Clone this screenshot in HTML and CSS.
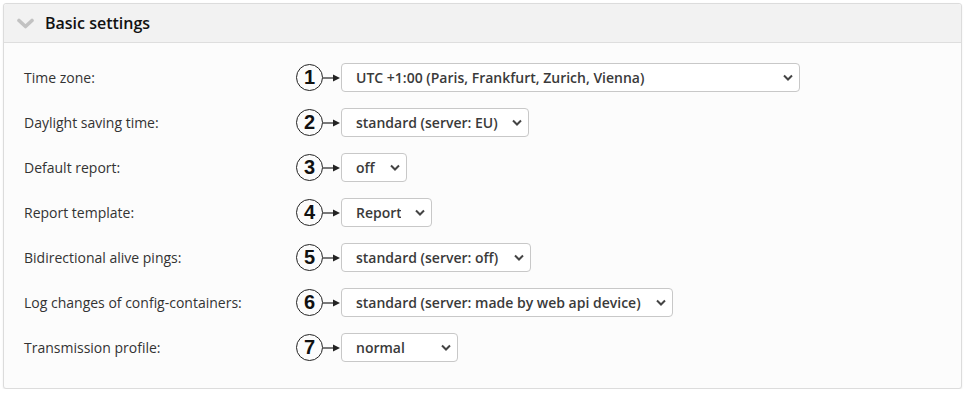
FILE: index.html
```html
<!DOCTYPE html>
<html lang="en">
<head>
    <meta charset="UTF-8">
    <meta name="viewport" content="width=device-width, initial-scale=1.0">
    <title>Basic settings</title>
    <link rel="stylesheet" href="styles.css">
</head>
<body>
    <div class="panel">
        <div class="panel-heading">
            <svg class="toggle-icon" width="17" height="11" viewBox="0 0 17 11">
                <path d="M2 2.5 L8.5 8.5 L15 2.5" stroke="#c2c2c2" stroke-width="3.6" fill="none" stroke-linecap="round" stroke-linejoin="round"/>
            </svg>
            <span class="panel-title">Basic settings</span>
        </div>
        <div class="panel-body">
            <div class="form-row">
                <label>Time zone:</label>
                <span class="marker">1</span>
                <svg class="arrow" width="18" height="10" viewBox="0 0 18 10"><path d="M0 5 H11" stroke="#222" stroke-width="1.2"/><path d="M10 1.5 L17 5 L10 8.5 Z" fill="#222"/></svg>
                <div class="select-wrap">
                    <select class="w-tz">
                        <option>UTC +1:00 (Paris, Frankfurt, Zurich, Vienna)</option>
                    </select>
                    <svg class="chevron" width="10" height="7" viewBox="0 0 10 7"><path d="M1 1.5 L5 5.5 L9 1.5" stroke="#444" stroke-width="2" fill="none"/></svg>
                </div>
            </div>
            <div class="form-row">
                <label>Daylight saving time:</label>
                <span class="marker">2</span>
                <svg class="arrow" width="18" height="10" viewBox="0 0 18 10"><path d="M0 5 H11" stroke="#222" stroke-width="1.2"/><path d="M10 1.5 L17 5 L10 8.5 Z" fill="#222"/></svg>
                <div class="select-wrap">
                    <select class="w-dst">
                        <option>standard (server: EU)</option>
                    </select>
                    <svg class="chevron" width="10" height="7" viewBox="0 0 10 7"><path d="M1 1.5 L5 5.5 L9 1.5" stroke="#444" stroke-width="2" fill="none"/></svg>
                </div>
            </div>
            <div class="form-row">
                <label>Default report:</label>
                <span class="marker">3</span>
                <svg class="arrow" width="18" height="10" viewBox="0 0 18 10"><path d="M0 5 H11" stroke="#222" stroke-width="1.2"/><path d="M10 1.5 L17 5 L10 8.5 Z" fill="#222"/></svg>
                <div class="select-wrap">
                    <select class="w-off">
                        <option>off</option>
                    </select>
                    <svg class="chevron" width="10" height="7" viewBox="0 0 10 7"><path d="M1 1.5 L5 5.5 L9 1.5" stroke="#444" stroke-width="2" fill="none"/></svg>
                </div>
            </div>
            <div class="form-row">
                <label>Report template:</label>
                <span class="marker">4</span>
                <svg class="arrow" width="18" height="10" viewBox="0 0 18 10"><path d="M0 5 H11" stroke="#222" stroke-width="1.2"/><path d="M10 1.5 L17 5 L10 8.5 Z" fill="#222"/></svg>
                <div class="select-wrap">
                    <select class="w-report">
                        <option>Report</option>
                    </select>
                    <svg class="chevron" width="10" height="7" viewBox="0 0 10 7"><path d="M1 1.5 L5 5.5 L9 1.5" stroke="#444" stroke-width="2" fill="none"/></svg>
                </div>
            </div>
            <div class="form-row">
                <label>Bidirectional alive pings:</label>
                <span class="marker">5</span>
                <svg class="arrow" width="18" height="10" viewBox="0 0 18 10"><path d="M0 5 H11" stroke="#222" stroke-width="1.2"/><path d="M10 1.5 L17 5 L10 8.5 Z" fill="#222"/></svg>
                <div class="select-wrap">
                    <select class="w-ping">
                        <option>standard (server: off)</option>
                    </select>
                    <svg class="chevron" width="10" height="7" viewBox="0 0 10 7"><path d="M1 1.5 L5 5.5 L9 1.5" stroke="#444" stroke-width="2" fill="none"/></svg>
                </div>
            </div>
            <div class="form-row">
                <label>Log changes of config-containers:</label>
                <span class="marker">6</span>
                <svg class="arrow" width="18" height="10" viewBox="0 0 18 10"><path d="M0 5 H11" stroke="#222" stroke-width="1.2"/><path d="M10 1.5 L17 5 L10 8.5 Z" fill="#222"/></svg>
                <div class="select-wrap">
                    <select class="w-log">
                        <option>standard (server: made by web api device)</option>
                    </select>
                    <svg class="chevron" width="10" height="7" viewBox="0 0 10 7"><path d="M1 1.5 L5 5.5 L9 1.5" stroke="#444" stroke-width="2" fill="none"/></svg>
                </div>
            </div>
            <div class="form-row">
                <label>Transmission profile:</label>
                <span class="marker">7</span>
                <svg class="arrow" width="18" height="10" viewBox="0 0 18 10"><path d="M0 5 H11" stroke="#222" stroke-width="1.2"/><path d="M10 1.5 L17 5 L10 8.5 Z" fill="#222"/></svg>
                <div class="select-wrap">
                    <select class="w-profile">
                        <option>normal</option>
                    </select>
                    <svg class="chevron" width="10" height="7" viewBox="0 0 10 7"><path d="M1 1.5 L5 5.5 L9 1.5" stroke="#444" stroke-width="2" fill="none"/></svg>
                </div>
            </div>
        </div>
    </div>
</body>
</html>
```

FILE: styles.css
```css
body {
    font-family: "Open Sans", Arial, sans-serif;
    background-color: #fff;
    margin: 0;
    padding: 3px 4px 0 3px;
    color: #333;
}
.panel {
    border: 1px solid #dcdcdc;
    border-radius: 3px;
    background-color: #fcfcfc;
    box-shadow: 0 1px 2px rgba(0, 0, 0, 0.08);
}
.panel-heading {
    display: flex;
    align-items: center;
    height: 38px;
    padding-left: 13px;
    background-color: #f2f2f2;
    border-bottom: 1px solid #dedede;
    border-radius: 3px 3px 0 0;
}
.toggle-icon {
    margin-right: 11px;
    margin-top: 0;
}
.panel-title {
    font-size: 16px;
    font-weight: 600;
    color: #111;
}
.panel-body {
    padding: 12px 20px 18px 20px;
}
.form-row {
    display: flex;
    align-items: center;
    height: 45px;
}
.form-row label {
    width: 272px;
    font-size: 14px;
    color: #333;
}
.marker {
    width: 25px;
    height: 25px;
    border: 1px solid #222;
    border-radius: 50%;
    display: flex;
    align-items: center;
    justify-content: center;
    font-family: "Liberation Sans", Arial, sans-serif;
    font-weight: bold;
    font-size: 20px;
    color: #111;
    box-sizing: content-box;
}
.select-wrap {
    position: relative;
    display: flex;
}
select {
    appearance: none;
    -webkit-appearance: none;
    height: 29px;
    padding: 0 30px 0 14px;
    border: 1px solid #c8c8c8;
    border-radius: 4px;
    background-color: #fff;
    font-family: "Open Sans", Arial, sans-serif;
    font-size: 14px;
    font-weight: 600;
    color: #3a3a3a;
}
.chevron {
    position: absolute;
    right: 7px;
    top: 11px;
    pointer-events: none;
}
.w-tz { width: 459px; }
.w-dst { width: 188px; }
.w-off { width: 66px; }
.w-report { width: 91px; }
.w-ping { width: 190px; }
.w-log { width: 332px; }
.w-profile { width: 117px; }
```
